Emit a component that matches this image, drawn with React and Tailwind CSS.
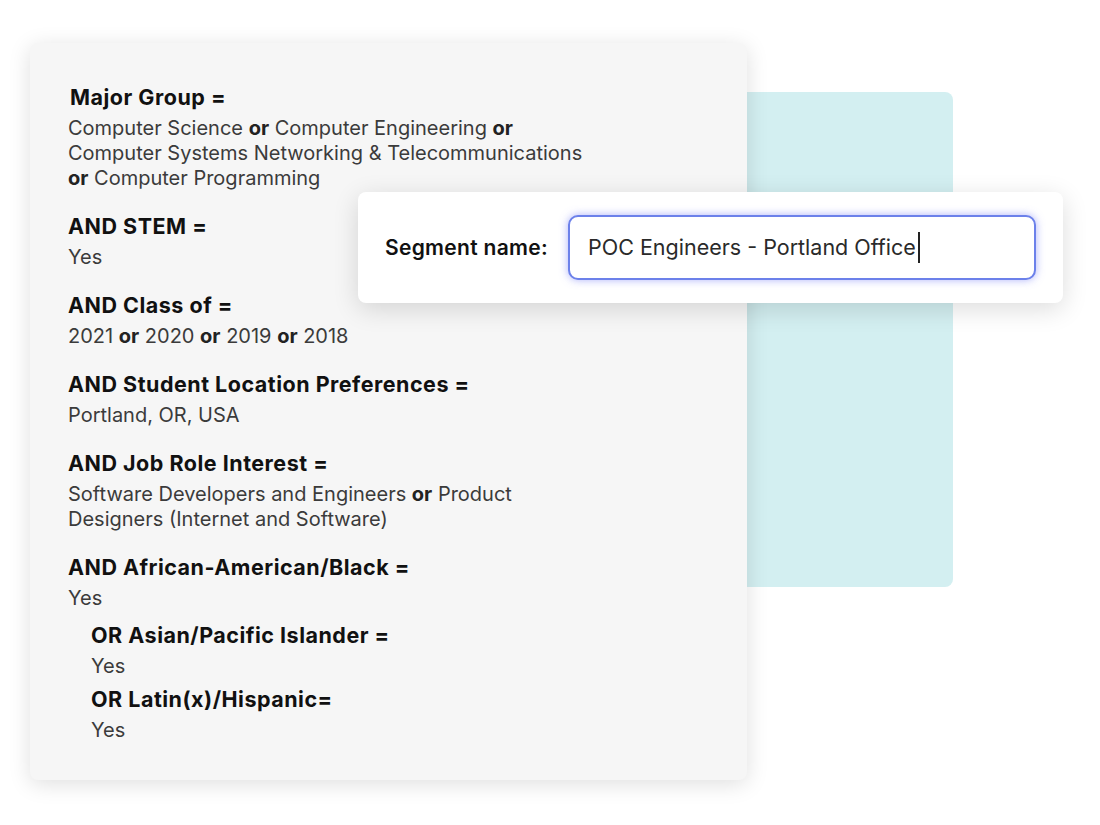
import React from 'react';

const sections = [
  {
    title: 'Major Group =',
    shift: true,
    lines: [
      ['Computer Science ', { b: 'or' }, ' Computer Engineering ', { b: 'or' }],
      ['Computer Systems Networking & Telecommunications'],
      [{ b: 'or' }, ' Computer Programming'],
    ],
  },
  { title: 'AND STEM =', lines: [['Yes']] },
  {
    title: 'AND Class of =',
    lines: [['2021 ', { b: 'or' }, ' 2020 ', { b: 'or' }, ' 2019 ', { b: 'or' }, ' 2018']],
  },
  { title: 'AND Student Location Preferences =', lines: [['Portland, OR, USA']] },
  {
    title: 'AND Job Role Interest =',
    lines: [
      ['Software Developers and Engineers ', { b: 'or' }, ' Product'],
      ['Designers (Internet and Software)'],
    ],
  },
];

function Line({ parts }) {
  return (
    <div className="leading-[25px]">
      {parts.map((p, i) =>
        typeof p === 'string' ? (
          <span key={i}>{p}</span>
        ) : (
          <span key={i} className="font-bold text-[#222]">
            {p.b}
          </span>
        )
      )}
    </div>
  );
}

function Section({ title, lines, shift, className = '' }) {
  return (
    <div className={className}>
      <div
        className={`text-[21.5px] font-bold leading-[28px] tracking-[0.5px] text-[#111] ${shift ? 'ml-[2px]' : ''}`}
      >
        {title}
      </div>
      <div className="mt-[5px] text-[20px] text-[#3b3b3b]">
        {lines.map((l, i) => (
          <Line key={i} parts={l} />
        ))}
      </div>
    </div>
  );
}

export default function App() {
  return (
    <div
      className="relative h-[825px] w-[1100px] overflow-hidden bg-white"
      style={{ fontFamily: 'Inter, "Noto Sans", sans-serif' }}
    >
      {/* teal backdrop */}
      <div className="absolute left-[700px] top-[92px] h-[495px] w-[253px] rounded-[8px] bg-[#d3eff1]" />

      {/* criteria card */}
      <div className="relative ml-[30px] mt-[43px] w-[717px] rounded-[8px] bg-[#f6f6f6] pb-[37px] pl-[38px] pt-[40px] shadow-[0_4px_22px_rgba(0,0,0,0.13)]">
        <div className="flex flex-col gap-[21px]">
          {sections.map((s) => (
            <Section key={s.title} {...s} />
          ))}
          <div>
            <Section title="AND African-American/Black =" lines={[['Yes']]} />
            <div className="ml-[23px] mt-[10px]">
              <Section title="OR Asian/Pacific Islander =" lines={[['Yes']]} />
              <Section className="mt-[6px]" title="OR Latin(x)/Hispanic=" lines={[['Yes']]} />
            </div>
          </div>
        </div>
      </div>

      {/* segment name popover */}
      <div className="absolute left-[358px] top-[192px] flex h-[111px] w-[705px] items-center rounded-[8px] bg-white pl-[27px] shadow-[0_6px_26px_rgba(0,0,0,0.14)]">
        <span className="w-[183px] text-[21px] font-semibold tracking-[0.3px] text-[#111]">
          Segment name:
        </span>
        <div className="flex h-[65px] w-[468px] items-center rounded-[10px] border-2 border-[#6c81ea] bg-white pl-[18px] shadow-[0_0_8px_rgba(105,115,245,0.55)]">
          <span className="text-[21.5px] text-[#2a2a2a]">POC Engineers - Portland Office</span>
          <span className="ml-[2px] h-[31px] w-[2px] bg-[#222]" />
        </div>
      </div>
    </div>
  );
}
